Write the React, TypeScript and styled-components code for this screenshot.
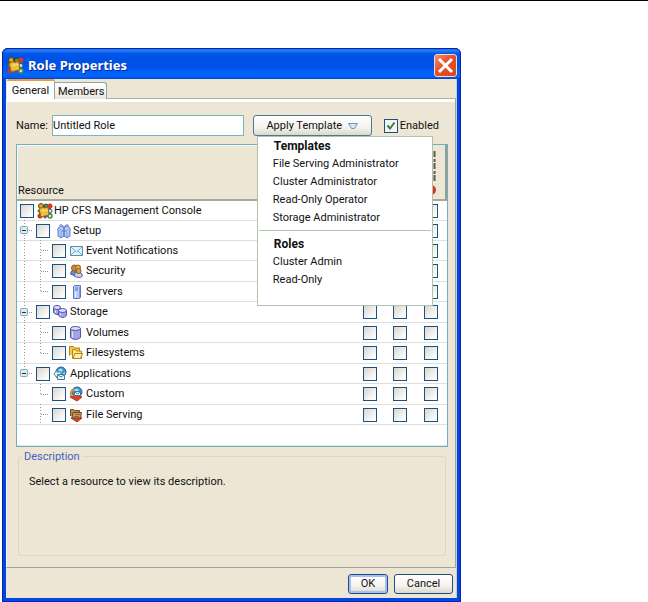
import React from "react";
import styled, { createGlobalStyle, css } from "styled-components";

const Global = createGlobalStyle`
  * { box-sizing: border-box; }
  body { margin: 0; background: #fff; color: #111; font: 11px/16px Roboto, "Noto Sans", sans-serif; }
  button, input { font: inherit; color: inherit; }
`;

const Page = styled.main`
  border-top: 1px solid #000;
  padding: 47px 2px 0;
`;
const Dialog = styled.section`
  width: 100%;
  max-width: 459px;
  background: #ede6d5;
  border: solid #0046e6;
  border-width: 0 4px 4px;
  border-radius: 6px 6px 0 0;
  box-shadow: inset -1px 0 #cfcbbc;
  outline: 1px solid #0826a8;
  outline-offset: -1px;
`;
const TitleBar = styled.header`
  display: flex;
  align-items: center;
  gap: 4px;
  height: 31px;
  margin: 0 -4px;
  padding: 3px 4px 0 5px;
  border-radius: 6px 6px 0 0;
  background: linear-gradient(#0a46c8 0, #2a82fa 2px, #0054e8 6px, #0050e4 18px, #0064fc 25px, #0062f8 29px, #0040c8 31px);
`;
const Title = styled.h1`
  flex: 1;
  margin: 0;
  color: #fff;
  font: bold 13px/20px "Noto Sans", sans-serif;
  text-shadow: 1px 1px #0a2a90;
`;
const Close = styled.button`
  display: flex;
  width: 23px;
  height: 23px;
  padding: 2px;
  border: 1px solid #f4d8d0;
  border-radius: 3px;
  background: linear-gradient(135deg, #f09078, #e4502a 45%, #d84818);
`;
const Tabs = styled.div`
  display: flex;
  align-items: flex-end;
  height: 20px;
  padding-left: 1px;
`;
const Tab = styled.button<{ $active?: boolean }>`
  height: 17px;
  padding: 0 3px;
  border: 1px solid #91a7a7;
  border-width: 1px 1px 0 0;
  border-radius: 0 3px 0 0;
  background: linear-gradient(#fff, #ece8dc);
  line-height: 15px;
  width: 52px;
  ${p => p.$active && css`
    width: 48px;
    height: 20px;
    border-top: 2px solid #f09a30;
    border-radius: 2px 2px 0 0;
    background: #fff;
  `}
`;
const Panel = styled.div`
  margin-right: 1px;
  padding: 12px 7px 11px 9px;
  border: solid #9ba5a0;
  border-width: 0 1px 1px 1px;
  border-left-color: #f8f6ee;
  box-shadow: inset 0 3px #fff;
`;
const TabLine = styled.span`
  flex: 1;
  border-bottom: 1px solid #aab4aa;
  margin-right: 1px;
`;
const Toolbar = styled.div`
  display: flex;
  align-items: center;
  height: 21px;
  margin: 4px 0 8px;
`;
const NameLabel = styled.label`
  width: 36px;
  white-space: nowrap;
`;
const NameInput = styled.input`
  flex: 1;
  min-width: 0;
  height: 21px;
  margin-right: 9px;
  padding: 0;
  border: 1px solid #7ab4c0;
  background: #fff;
`;
const MenuAnchor = styled.div`
  position: relative;
  margin-right: 12px;
`;
const Button = styled.button<{ $width: number; $primary?: boolean }>`
  display: flex;
  align-items: center;
  justify-content: center;
  gap: 6px;
  width: ${p => p.$width}px;
  height: 20px;
  padding: 0;
  border: 1px solid #1c5080;
  border-radius: 3px;
  background: linear-gradient(#fff, #f5f3ee 60%, #dcd8cc);
  box-shadow: ${p => p.$primary ? "inset 0 0 0 2px #a9bdf0" : "none"};
`;
const Apply = styled(Button)`
  height: 21px;
  border-color: #4c7898;
`;
const Menu = styled.div`
  position: absolute;
  z-index: 1;
  top: 21px;
  left: 4px;
  width: 176px;
  padding-bottom: 16px;
  border: 1px solid #b0c4ac;
  background: #fff;
`;
const MenuHeading = styled.h2`
  margin: 0;
  padding-left: 16px;
  font: bold 12px/18px Roboto, "Noto Sans", sans-serif;
`;
const MenuItem = styled.button`
  display: block;
  width: 100%;
  height: 18px;
  padding: 0 0 0 15px;
  border: 0;
  background: none;
  line-height: 18px;
  text-align: left;
`;
const MenuRule = styled.hr`
  height: 1px;
  margin: 3px 1px 4px;
  border: 0;
  background: #b0c4ac;
`;
const CheckLabel = styled.label`
  display: flex;
  align-items: center;
  gap: 2px;
  padding-right: 9px;
`;
const CheckBox = styled.input.attrs({ type: "checkbox" })`
  appearance: none;
  flex: none;
  display: block;
  width: 14px;
  height: 14px;
  margin: 0;
  border: 1px solid #1c5180;
  background: linear-gradient(135deg, #d8d6ce, #fbfbfa 80%);
  &:checked {
    background: url("data:image/svg+xml,%3Csvg xmlns='http://www.w3.org/2000/svg' viewBox='0 0 12 12'%3E%3Cpath d='M2.5 5.5l2.5 3 4.500-6' fill='none' stroke='%23358040' stroke-width='2'/%3E%3C/svg%3E"), #f4f3ef;
  }
`;
const TableFrame = styled.div`
  border: 1px solid #6fb2be;
  background: #fff;
`;
const Table = styled.table`
  width: 100%;
  border-collapse: separate;
  border-spacing: 0;
  table-layout: fixed;
  th, td { padding: 0; }
`;
const ResourceHead = styled.th`
  height: 56px;
  padding-left: 1px !important;
  vertical-align: bottom;
  text-align: left;
  font-weight: normal;
  background: #ede6d5;
  border-bottom: 2px solid #aaa79b;
  box-shadow: inset 1px 1px #faf8f0;
`;
const ColumnHead = styled.th<{ $width: number; $last?: boolean }>`
  width: ${p => p.$width}px;
  background: #ede6d5;
  border-bottom: 2px solid #aaa79b;
  border-right: ${p => p.$last ? "2px solid #9a9c92" : "0"};
  vertical-align: bottom;
  svg { display: block; margin: 0 auto; }
`;
const Row = styled.tr`
  height: 20px;
  td { border-bottom: 1px solid #dddfdf; }
  &:nth-child(2n + 4) { height: 21px; }
`;
const Filler = styled.tr`
  height: 21px;
  td { border-bottom: 1px solid #dce8e8; }
`;
const Resource = styled.div`
  display: flex;
  align-items: center;
  height: 19px;
  padding-left: 3px;
`;
const ResourceLabel = styled.label<{ $wide?: boolean }>`
  display: flex;
  align-items: center;
  gap: 1px;
  padding-left: ${p => p.$wide ? 6 : 3}px;
  white-space: nowrap;
  svg { flex: none; }
`;
const Permission = styled.td`
  input { margin: 0 auto; }
`;
const GuideSvg = styled.svg`
  flex: none;
  margin: -1px 0;
`;
const Description = styled.fieldset`
  min-height: 106px;
  margin: 3px 2px 0;
  padding: 8px 10px;
  border: 1px solid #dcd6c4;
  border-radius: 3px;
  legend { padding: 0 2px; margin-left: -7px; color: #4560c0; line-height: 13px; }
  p { margin: 3px 0 0; }
`;
const Footer = styled.footer`
  display: flex;
  justify-content: flex-end;
  gap: 6px;
  padding: 6px 4px 4px 0;
`;

type IconName = "console" | "setup" | "mail" | "users" | "server" | "storage" | "volume" | "folder" | "apps" | "custom" | "serving";

const Cylinder = ({ x, y, w, h }: { x: number; y: number; w: number; h: number }) => (
  <g stroke="#5052a4">
    <path d={`M${x} ${y + 2}v${h - 4}q${w / 2} 4 ${w} 0v-${h - 4}z`} fill="#a3a4e6" />
    <ellipse cx={x + w / 2} cy={y + 2} rx={w / 2} ry="2" fill="#d9dcff" />
    <path d={`M${x + 2} ${y + 5}v${h - 7}`} stroke="#e4e6ff" />
  </g>
);
const Globe = ({ cx, cy }: { cx: number; cy: number }) => (
  <g>
    <circle cx={cx} cy={cy} r="5" fill="#3f8fd4" stroke="#2c62a0" />
    <path d={`M${cx - 3} ${cy - 2}q3-3 5 0l-2 3zM${cx + 1} ${cy + 2}l3-2v3z`} fill="#a6ddea" />
  </g>
);
const art: Record<IconName, React.ReactNode> = {
  console: (
    <g>
      <path d="M2 2h12v12H2z" fill="#5c5630" />
      <circle cx="4" cy="3" r="2.500" fill="#e2a32c" stroke="#584418" />
      <circle cx="9" cy="3" r="2" fill="#4f9a58" stroke="#284828" />
      <circle cx="13" cy="3" r="2.500" fill="#d43a28" />
      <circle cx="13" cy="8" r="2" fill="#cfe0f0" stroke="#30609a" />
      <circle cx="13" cy="13" r="2" fill="#e8e4e0" stroke="#3a9450" strokeWidth="1.500" />
      <circle cx="3" cy="13" r="2.500" fill="#c23824" />
      <circle cx="8" cy="14" r="1.500" fill="#3a5cb0" />
      <circle cx="2" cy="8" r="1.500" fill="#4a7a48" />
      <path d="M2 6l4-2 1 1 4-1 1 8-8 2z" fill="#f0be38" stroke="#94681c" />
      <path d="M5 8l6-1" stroke="#fce890" />
    </g>
  ),
  setup: (
    <g stroke="#5878c8">
      <path d="M2 5l4-2 2 1v9l-3 2-3-2zM8 4l3-1 3 2v8l-3 2-3-2z" fill="#b4ccf8" />
      <path d="M5 6v9M11 6v9" stroke="#7e9ae4" />
      <path d="M3 3q2-3 4 0M9 3q2-3 4 0M6 8h4" fill="none" />
    </g>
  ),
  mail: (
    <g stroke="#4f93b4">
      <path d="M1.500 3.500h12v9h-12z" fill="#e2f4fa" />
      <path d="M2 4l5.500 5L13 4M2 12l4-4M13 12L9 8" fill="none" stroke="#78acc8" />
    </g>
  ),
  users: (
    <g>
      <path d="M1.500 11q0-4 4-4t5 5q-5 2-9-1z" fill="#7088d4" stroke="#4a5ca4" />
      <circle cx="5.500" cy="5" r="3" fill="#cc8c34" stroke="#8a5c20" />
      <circle cx="9" cy="4.500" r="2.500" fill="#e2ac50" stroke="#8a5c20" />
      <path d="M5 13q0-4 4-4t4.500 4q-3 3-8.500 0z" fill="#c4d0ee" stroke="#5265a4" />
      <circle cx="9.500" cy="8" r="2.500" fill="#dca048" stroke="#8a5c20" />
    </g>
  ),
  server: (
    <g>
      <path d="M4.500 2.500l1-1h6v12l-1 1h-6z" fill="#b8caf8" stroke="#5c74cc" />
      <path d="M6 4h3M6 6h3" stroke="#5c74cc" />
      <path d="M6.500 8v5" stroke="#eef4ff" />
      <path d="M10.500 3v11" stroke="#849be2" />
    </g>
  ),
  storage: <g><Cylinder x={0.5} y={1.5} w={7} h={9} /><Cylinder x={5.5} y={4.5} w={8} h={9} /></g>,
  volume: <Cylinder x={1.5} y={1.5} w={10} h={13} />,
  folder: (
    <g stroke="#b88414">
      <path d="M.5 10.500v-9h4l1 1.500h5v5" fill="#f4ca4c" />
      <path d="M3.500 13.500v-9h3l1 1.500h5v7.500z" fill="#fbe290" />
      <path d="M4 13.500l2-5h7.500l-2 5z" fill="#ffedaa" />
    </g>
  ),
  apps: (
    <g>
      <Globe cx={8} cy={6} />
      <path d="M1 8l3-4v2h4v4H4v2z" fill="#e8f4f8" stroke="#4d89a4" />
      <path d="M4.500 8.500h7v5h-7z" fill="#eef8fc" stroke="#3c7c9c" />
      <path d="M5 9l3 2 3-2" fill="none" stroke="#3c7c9c" />
    </g>
  ),
  custom: (
    <g>
      <Globe cx={8} cy={6} />
      <path d="M1 11l6-2 6 2-5 4z" fill="#d94024" stroke="#b03c24" />
      <path d="M5.500 5.500h6v4h-6z" fill="#eef8fc" stroke="#3c7c9c" />
      <path d="M6 6l2.500 2L11 6" fill="none" stroke="#3c7c9c" />
      <path d="M2 10q-1-5 3-7" fill="none" stroke="#d69038" strokeWidth="2" />
    </g>
  ),
  serving: (
    <g>
      <path d="M2 11l6-2 5 2-5 4z" fill="#d94024" stroke="#b03c24" />
      <path d="M1.500 9V2.500h3l1 1h5V8" fill="#b48c58" stroke="#6a4822" />
      <path d="M3 10.500l1-5h8.500l-1 5.500H5z" fill="#c69c64" stroke="#6a4822" />
      <path d="M6 7.500h5M5 9.500h5" stroke="#8a6234" />
    </g>
  ),
};
const Icon = ({ name, size = 16 }: { name: IconName; size?: number }) => (
  <svg width={size} height={size} viewBox="0 0 16 16" aria-hidden="true">{art[name]}</svg>
);

type Line = "trunk" | "tee" | "elbow" | "open" | "openLast" | "none";
const Guide = ({ line }: { line: Line }) => {
  const open = line === "open" || line === "openLast";
  const end = line === "elbow" || line === "openLast" ? 11 : 21;
  return (
    <GuideSvg width="16" height="21" aria-hidden="true">
      {line !== "none" && <path d={`M4.500 0V${end}`} stroke="#a090a0" strokeDasharray="1 2" />}
      {line !== "none" && line !== "trunk" && <path d="M5 10.500h8" stroke="#a090a0" strokeDasharray="1 1" />}
      {open && <rect x="0.500" y="6.500" width="7" height="7" rx="1" fill="#dcebee" stroke="#86a4b2" />}
      {open && <path d="M2 10.500h4" stroke="#12384c" />}
    </GuideSvg>
  );
};

const resources: { name: string; icon: IconName; guides: Line[] }[] = [
  { name: "HP CFS Management Console", icon: "console", guides: [] },
  { name: "Setup", icon: "setup", guides: ["open"] },
  { name: "Event Notifications", icon: "mail", guides: ["trunk", "tee"] },
  { name: "Security", icon: "users", guides: ["trunk", "tee"] },
  { name: "Servers", icon: "server", guides: ["trunk", "elbow"] },
  { name: "Storage", icon: "storage", guides: ["open"] },
  { name: "Volumes", icon: "volume", guides: ["trunk", "tee"] },
  { name: "Filesystems", icon: "folder", guides: ["trunk", "elbow"] },
  { name: "Applications", icon: "apps", guides: ["openLast"] },
  { name: "Custom", icon: "custom", guides: ["none", "elbow"] },
  { name: "File Serving", icon: "serving", guides: ["none", "tee"] },
];
const templates = ["File Serving Administrator", "Cluster Administrator", "Read-Only Operator", "Storage Administrator"];
const roles = ["Cluster Admin", "Read-Only"];

export default function App() {
  return (
    <Page>
      <Global />
      <Dialog role="dialog" aria-labelledby="title">
        <TitleBar>
          <Icon name="console" size={17} />
          <Title id="title">Role Properties</Title>
          <Close aria-label="Close">
            <svg width="17" height="17" viewBox="0 0 17 17"><path d="M2 2l13 13M15 2L2 15" stroke="#fff" strokeWidth="3" /></svg>
          </Close>
        </TitleBar>
        <Tabs role="tablist">
          <Tab role="tab" aria-selected="true" $active>General</Tab>
          <Tab role="tab" aria-selected="false">Members</Tab>
          <TabLine />
        </Tabs>
        <Panel>
          <Toolbar>
            <NameLabel htmlFor="name">Name:</NameLabel>
            <NameInput id="name" defaultValue="Untitled Role" />
            <MenuAnchor>
              <Apply $width={119} aria-haspopup="menu" aria-expanded="true">
                Apply Template
                <svg width="10" height="8" aria-hidden="true"><path d="M.5 1.500h9l-3 5h-3z" fill="#d4e6f0" stroke="#6c9ab4" /></svg>
              </Apply>
              <Menu role="menu">
                <MenuHeading>Templates</MenuHeading>
                {templates.map(t => <MenuItem role="menuitem" key={t}>{t}</MenuItem>)}
                <MenuRule />
                <MenuHeading>Roles</MenuHeading>
                {roles.map(r => <MenuItem role="menuitem" key={r}>{r}</MenuItem>)}
              </Menu>
            </MenuAnchor>
            <CheckLabel><CheckBox defaultChecked />Enabled</CheckLabel>
          </Toolbar>
          <TableFrame>
            <Table>
              <thead>
                <tr>
                  <ResourceHead>Resource</ResourceHead>
                  <ColumnHead $width={30} />
                  <ColumnHead $width={30} />
                  <ColumnHead $width={32} $last>
                    <svg width="14" height="50" aria-hidden="true">
                      <path d="M11.500 2v32" stroke="#5c5850" strokeWidth="2" strokeDasharray="6 2 3 1" />
                      <circle cx="8" cy="41" r="5" fill="#d83818" />
                    </svg>
                  </ColumnHead>
                </tr>
              </thead>
              <tbody>
                {resources.map((r, i) => (
                  <Row key={r.name}>
                    <td>
                      <Resource>
                        {r.guides.map((g, n) => <Guide key={n} line={g} />)}
                        <CheckBox id={`resource-${i}`} />
                        <ResourceLabel htmlFor={`resource-${i}`} $wide={r.icon === "setup"}>
                          <Icon name={r.icon} />{r.name}
                        </ResourceLabel>
                      </Resource>
                    </td>
                    {[1, 2, 3].map(n => <Permission key={n}><CheckBox aria-label={`${r.name}, permission ${n}`} /></Permission>)}
                  </Row>
                ))}
                <Filler><td colSpan={4} /></Filler>
              </tbody>
            </Table>
          </TableFrame>
          <Description>
            <legend>Description</legend>
            <p>Select a resource to view its description.</p>
          </Description>
        </Panel>
        <Footer>
          <Button $width={40} $primary>OK</Button>
          <Button $width={59}>Cancel</Button>
        </Footer>
      </Dialog>
    </Page>
  );
}
